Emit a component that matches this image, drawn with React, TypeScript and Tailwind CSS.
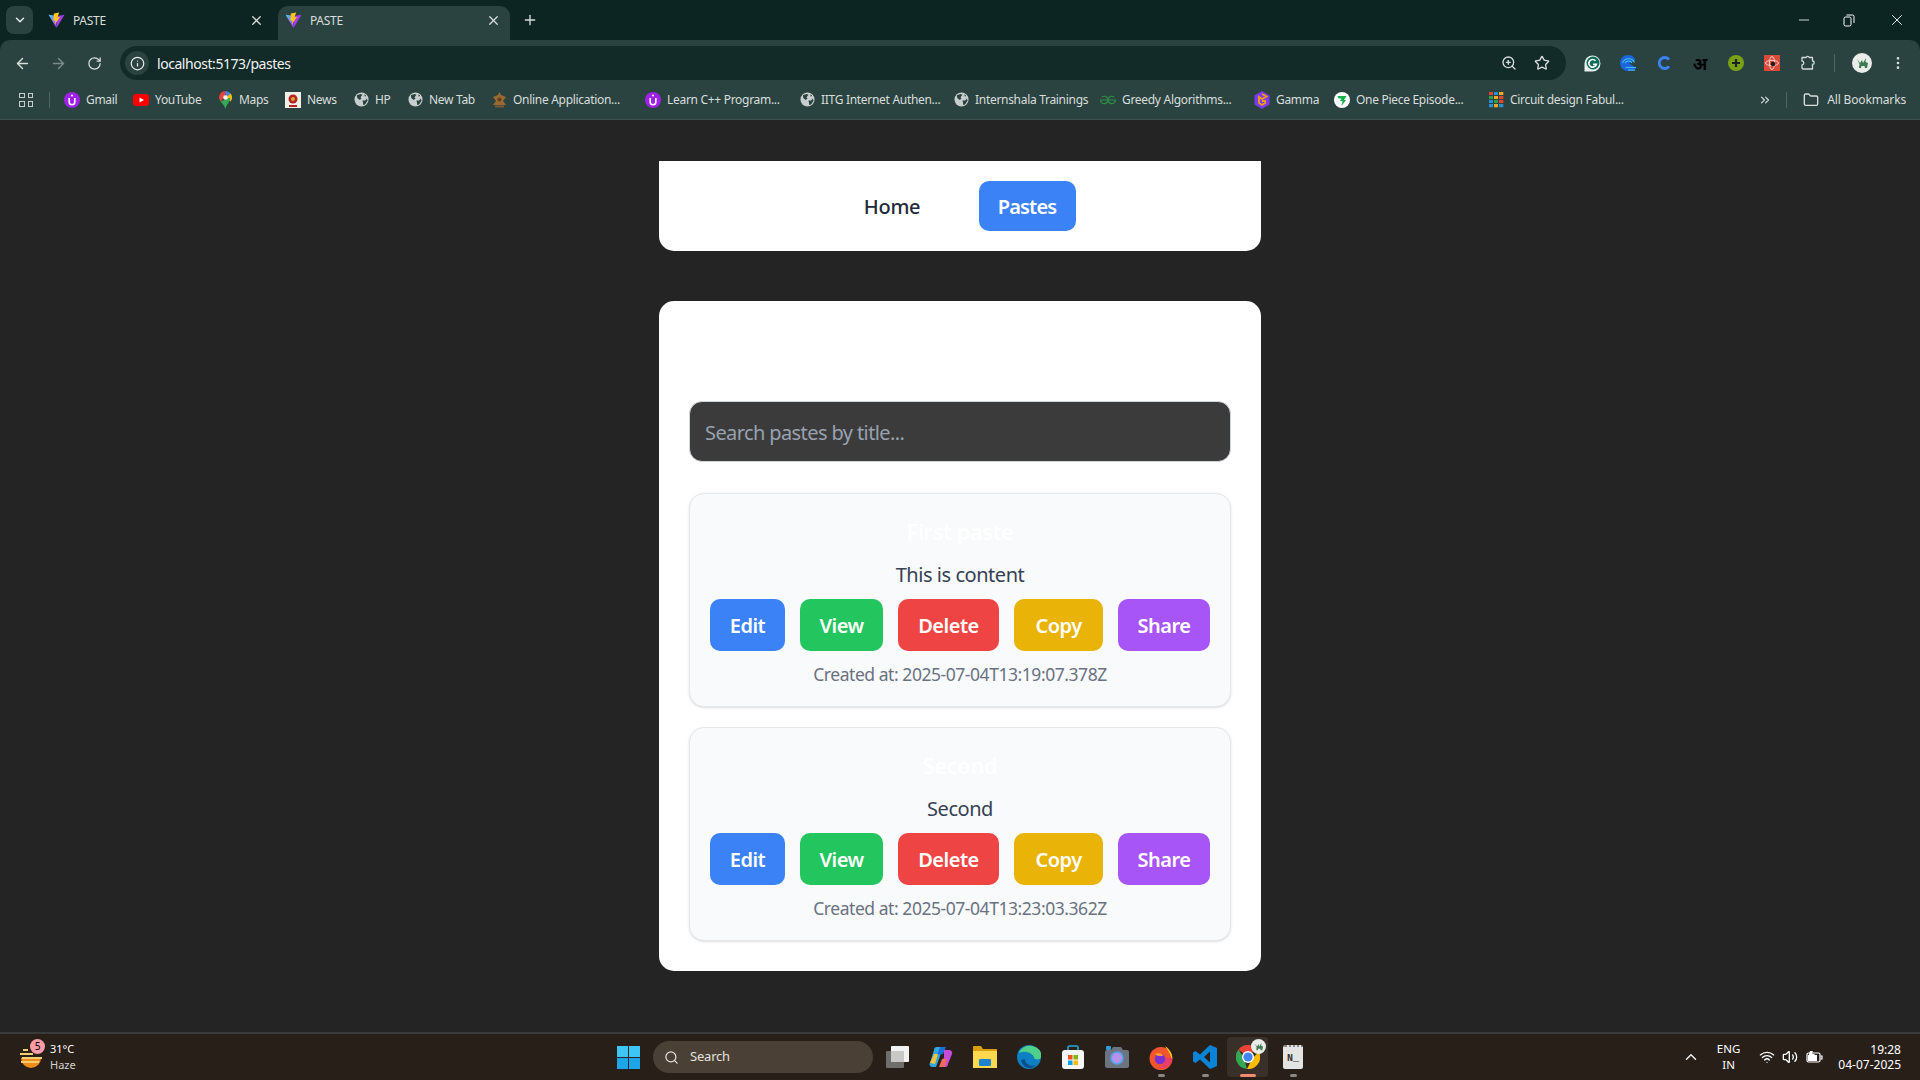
import {
  ArrowLeft,
  ArrowRight,
  ChevronDown,
  ChevronUp,
  ChevronsRight,
  EllipsisVertical,
  Folder,
  Info,
  Minus,
  Plus,
  RotateCw,
  Search,
  Star,
  Volume2,
  Wifi,
  X,
  ZoomIn,
} from 'lucide-react'
import type { ReactNode } from 'react'

function ViteIcon() {
  return (
    <svg width="17" height="17" viewBox="0 0 32 32" className="shrink-0">
      <defs>
        <linearGradient id="viteA" x1="0" y1="0" x2="1" y2="1">
          <stop offset="0" stopColor="#41d1ff" />
          <stop offset="1" stopColor="#bd34fe" />
        </linearGradient>
      </defs>
      <path d="M1 5 L15 7 L16 30 Z" fill="url(#viteA)" />
      <path d="M31 5 L16 8 L16 30 Z" fill="#a43cf0" />
      <path d="M21 1 L11 3 L10 17 L14 16 L13 23 L23 9 L18 10 Z" fill="#ffc517" />
    </svg>
  )
}

function GlobeIcon() {
  return (
    <svg width="15" height="15" viewBox="0 0 16 16" className="shrink-0">
      <circle cx="8" cy="8" r="7.5" fill="#c6cfcd" />
      <path
        d="M3 3.5 L7 2 L9 3 L7 5.5 L8 7 L6 8.5 L3.5 6.5 Z M9 9 L12 9 L13.5 7 L14.5 9 L12 13 L10 14 L9.5 11 Z M11 2.5 L13 4 L11.5 5 Z"
        fill="#2c4340"
      />
    </svg>
  )
}

function PurpleIcon() {
  return (
    <svg width="16" height="16" viewBox="0 0 16 16" className="shrink-0">
      <circle cx="8" cy="8" r="8" fill="#a020e8" />
      <path d="M5.2 6 V10 A2.8 2.8 0 0 0 10.8 10 V6" fill="none" stroke="#fff" strokeWidth="1.6" />
      <circle cx="8" cy="3.6" r="1" fill="#fff" />
    </svg>
  )
}

function YouTubeIcon() {
  return (
    <svg width="16" height="16" viewBox="0 0 16 16" className="shrink-0">
      <rect y="2" width="16" height="12" rx="3" fill="#f00" />
      <path d="M6.5 5.5 L11 8 L6.5 10.5 Z" fill="#fff" />
    </svg>
  )
}

function MapsIcon() {
  return (
    <svg width="13" height="18" viewBox="0 0 13 18" className="shrink-0">
      <path d="M6.5 0 A6.5 6.5 0 0 0 1.5 10.5 L6.5 5 Z" fill="#ea4335" />
      <path d="M6.5 0 A6.5 6.5 0 0 1 11.7 2.6 L6.5 6.5 Z" fill="#4285f4" />
      <path d="M11.7 2.6 A6.5 6.5 0 0 1 11.5 10.5 L6.5 6.5 Z" fill="#fbbc04" />
      <path d="M1.5 10.5 L11.5 6.5 C11 11 8 12 6.5 18 C5.8 15 3.5 13 1.5 10.5 Z" fill="#34a853" />
      <circle cx="6.5" cy="6.5" r="2.3" fill="#f4f4f4" />
    </svg>
  )
}

function NewsIcon() {
  return (
    <svg width="16" height="16" viewBox="0 0 16 16" className="shrink-0">
      <rect width="16" height="16" fill="#f3efe6" />
      <circle cx="8" cy="7" r="4.5" fill="#b3261e" />
      <path d="M4 13 H12 V15 H4 Z" fill="#b3261e" />
      <circle cx="8" cy="7" r="2" fill="#e3a23a" />
    </svg>
  )
}

function EmblemIcon() {
  return (
    <svg width="15" height="16" viewBox="0 0 15 16" className="shrink-0">
      <path d="M7.5 0 L9 3 L14 5 L11 9 L14 13 H1 L4 9 L1 5 L6 3 Z" fill="#9a6b30" />
      <rect x="3" y="13.5" width="9" height="2" fill="#7d5a32" />
      <circle cx="7.5" cy="7.5" r="2" fill="#5e3d22" />
    </svg>
  )
}

function GfgIcon() {
  return (
    <svg width="16" height="16" viewBox="0 0 16 16" className="shrink-0" fill="none" stroke="#2f8d46" strokeWidth="1.2">
      <path d="M8 8 H15.5 A3.7 3.7 0 1 1 14 5" />
      <path d="M8 8 H0.5 A3.7 3.7 0 1 0 2 5" />
    </svg>
  )
}

function GammaIcon() {
  return (
    <svg width="16" height="18" viewBox="0 0 16 18" className="shrink-0">
      <path d="M8 0 L15.5 4.5 V13.5 L8 18 L0.5 13.5 V4.5 Z" fill="#7c3aed" />
      <path d="M8 3 L12.5 5.5 L8 8 L5 6 V12 L8 14 L11 12 V10 L8 10" fill="none" stroke="#f59e0b" strokeWidth="1.8" />
    </svg>
  )
}

function OnePieceIcon() {
  return (
    <svg width="16" height="16" viewBox="0 0 16 16" className="shrink-0">
      <circle cx="8" cy="8" r="8" fill="#fff" />
      <path d="M3.5 4 H12.5 L10 8 H12 L7.5 14 L8.5 9 H6 L7.5 6.5 H4.5 Z" fill="#10b14a" />
    </svg>
  )
}

function TinkercadIcon() {
  const cells = ['#e8442e', '#2b8fd6', '#f5a623', '#2f9e44', '#f5a623', '#e8442e', '#2b8fd6', '#2f9e44', '#e8442e', '#2b8fd6', '#f5a623', '#2b8fd6']
  return (
    <div className="grid h-[16px] w-[15px] shrink-0 grid-cols-3 grid-rows-4 gap-px">
      {cells.map((c, i) => (
        <svg key={i} viewBox="0 0 4 4" preserveAspectRatio="none" className="h-full w-full">
          <rect width="4" height="4" fill={c} />
        </svg>
      ))}
    </div>
  )
}

function Avatar({ size }: { size: number }) {
  return (
    <svg width={size} height={size} viewBox="0 0 20 20">
      <circle cx="10" cy="10" r="10" fill="#e9ece9" />
      <path d="M5 6 L8 10 L10 7 L11 10 L14 5 L13.5 9 L16 10 L15 15 H13 L12.5 13 H9.5 L9 15 H7 L7.5 11 Z" fill="#3c7a55" />
    </svg>
  )
}

const bookmarks: { label: string; icon: ReactNode; w: string }[] = [
  { label: 'Gmail', icon: <PurpleIcon />, w: 'w-[31px]' },
  { label: 'YouTube', icon: <YouTubeIcon />, w: 'w-[46px]' },
  { label: 'Maps', icon: <MapsIcon />, w: 'w-[30px]' },
  { label: 'News', icon: <NewsIcon />, w: 'w-[30px]' },
  { label: 'HP', icon: <GlobeIcon />, w: 'w-[16px]' },
  { label: 'New Tab', icon: <GlobeIcon />, w: 'w-[46px]' },
  { label: 'Online Application...', icon: <EmblemIcon />, w: 'w-[116px]' },
  { label: 'Learn C++ Program...', icon: <PurpleIcon />, w: 'w-[116px]' },
  { label: 'IITG Internet Authen...', icon: <GlobeIcon />, w: 'w-[116px]' },
  { label: 'Internshala Trainings', icon: <GlobeIcon />, w: 'w-[109px]' },
  { label: 'Greedy Algorithms...', icon: <GfgIcon />, w: 'w-[116px]' },
  { label: 'Gamma', icon: <GammaIcon />, w: 'w-[42px]' },
  { label: 'One Piece Episode...', icon: <OnePieceIcon />, w: 'w-[116px]' },
  { label: 'Circuit design Fabul...', icon: <TinkercadIcon />, w: 'w-[114px]' },
]

function Bookmark({ label, icon, w }: { label: string; icon: ReactNode; w: string }) {
  return (
    <div className="flex h-[28px] items-center gap-[6px] px-[8px]">
      <div className="flex w-[16px] justify-center">{icon}</div>
      <span className={`${w} whitespace-nowrap text-[12px] tracking-[-0.3px] text-[#d7dedc]`}>{label}</span>
    </div>
  )
}

function Tab({ active }: { active?: boolean }) {
  return (
    <div
      className={`flex h-[34px] w-[232px] items-center rounded-t-[10px] pb-[6px] pl-[7px] pr-[9px] ${
        active ? 'bg-[#2b4340]' : ''
      }`}
    >
      <ViteIcon />
      <span className="ml-[8px] mt-[2px] text-[12px] tracking-[-0.3px] text-[#d7dedc]">PASTE</span>
      <X size={15} strokeWidth={2} className="ml-auto text-[#d7dedc]" />
    </div>
  )
}

function ExtSlot({ children }: { children: ReactNode }) {
  return <div className="flex h-[34px] w-[36px] items-center justify-center">{children}</div>
}

function BrowserChrome() {
  return (
    <div className="shrink-0 bg-[#0c2523] font-['Noto_Sans',sans-serif]">
      <div className="flex h-[40px] items-end pl-[6px]">
        <div className="mb-[6px] flex h-[28px] w-[27px] items-center justify-center rounded-[8px] bg-[#2b4340]">
          <ChevronDown size={14} strokeWidth={2.5} className="text-[#e5eae9]" />
        </div>
        <div className="ml-[8px]">
          <Tab />
        </div>
        <div className="ml-[5px]">
          <Tab active />
        </div>
        <Plus size={16} strokeWidth={2} className="mb-[12px] ml-[12px] text-[#d7dedc]" />
        <div className="mb-[11px] ml-auto flex items-center">
          <Minus size={16} strokeWidth={1.2} className="mr-[31px] text-white" />
          <svg width="12" height="13" viewBox="0 0 12 13" fill="none" stroke="#fff" strokeWidth="1" className="mr-[33px]">
            <rect x="1" y="3" width="7" height="9" rx="1.5" />
            <path d="M3.5 1 H9.5 A1.5 1.5 0 0 1 11 2.5 V9" />
          </svg>
          <X size={18} strokeWidth={1.2} className="mr-[14px] text-white" />
        </div>
      </div>

      <div className="rounded-t-[10px] bg-[#2b4340]">
        <div className="flex h-[40px] items-end pl-[4px] pr-[4px]">
          <div className="flex h-[34px] w-[116px] items-center text-[#d7dedc]">
            <div className="flex w-[36px] justify-center">
              <ArrowLeft size={17} />
            </div>
            <div className="flex w-[36px] justify-center text-[#7b8d8a]">
              <ArrowRight size={17} />
            </div>
            <div className="flex w-[36px] justify-center">
              <RotateCw size={15} />
            </div>
          </div>
          <div className="flex h-[34px] w-[1446px] items-center rounded-full bg-[#122a28] pl-[5px]">
            <div className="flex h-[24px] w-[24px] items-center justify-center rounded-full bg-[#2b4340]">
              <Info size={15} className="text-[#e5eae9]" />
            </div>
            <span className="ml-[8px] text-[14px] tracking-[-0.45px] text-[#f0f3f2]">localhost:5173/pastes</span>
            <div className="ml-auto flex items-center pr-[16px]">
              <ZoomIn size={16} className="mr-[17px] text-[#d7dedc]" />
              <Star size={16} className="text-[#d7dedc]" />
            </div>
          </div>
          <div className="ml-[8px] flex items-center">
            <ExtSlot>
              <svg width="17" height="17" viewBox="0 0 17 17">
                <path d="M8.5 0.5 A8 8 0 1 1 8.5 16.5 H0.5 V8.5 A8 8 0 0 1 8.5 0.5 Z" fill="#e8f2ef" />
                <circle cx="9" cy="8" r="6.5" fill="#0c6b58" />
                <path d="M11.5 5.8 A3.8 3.8 0 1 0 12.3 9.4 H9" fill="none" stroke="#fff" strokeWidth="1.7" />
              </svg>
            </ExtSlot>
            <ExtSlot>
              <svg width="16" height="16" viewBox="0 0 16 16" fill="none">
                <path d="M8 0 A8 8 0 0 1 15 4 L15 6 L9 8 L16 13 L14 16 H8 A8 8 0 0 1 8 0 Z" fill="#1a66dd" />
                <path d="M14.5 7.5 A6.5 6.5 0 0 0 2.5 8 M12 8 A4 4 0 0 0 5 8 M5.5 12.5 H16 M8 15 H15" stroke="#45c2ee" strokeWidth="1.1" />
              </svg>
            </ExtSlot>
            <ExtSlot>
              <svg width="12" height="14" viewBox="0 0 12 14" fill="none">
                <path d="M11 3.5 A5.5 5.5 0 1 0 11 10.5" stroke="#3b82f6" strokeWidth="2.8" />
              </svg>
            </ExtSlot>
            <ExtSlot>
              <span className="font-['Noto_Sans','DejaVu_Sans',sans-serif] text-[17px] font-bold leading-none text-black">अ</span>
            </ExtSlot>
            <ExtSlot>
              <svg width="16" height="16" viewBox="0 0 16 16">
                <circle cx="8" cy="8" r="8" fill="#7aa116" />
                <path d="M8 4 V12 M4 8 H12" stroke="#16241f" strokeWidth="2.2" />
              </svg>
            </ExtSlot>
            <ExtSlot>
              <svg width="16" height="16" viewBox="0 0 16 16" fill="none">
                <rect width="16" height="16" fill="#d94a38" />
                <ellipse cx="8" cy="8" rx="6.5" ry="2.6" stroke="#f6d8d2" strokeWidth="0.9" />
                <ellipse cx="8" cy="8" rx="2.6" ry="6.5" stroke="#f6d8d2" strokeWidth="0.9" />
                <circle cx="9" cy="9" r="2.2" fill="#1c1c1c" />
              </svg>
            </ExtSlot>
            <ExtSlot>
              <svg width="16" height="16" viewBox="0 0 16 16" fill="none" stroke="#d2dbd9" strokeWidth="1.3" strokeLinejoin="round">
                <path d="M2 2.5 H6 A1.8 1.8 0 0 1 9.4 2.5 H12.5 V6 A1.7 1.7 0 0 1 12.5 9.4 V14 H3 A1 1 0 0 1 2 13 V9.8 A1.8 1.8 0 0 0 2 6.2 Z" />
              </svg>
            </ExtSlot>
            <div className="ml-[8px] mr-[9px] h-[18px] w-px bg-[#4e6461]" />
            <ExtSlot>
              <Avatar size={20} />
            </ExtSlot>
            <ExtSlot>
              <EllipsisVertical size={16} className="text-[#d7dedc]" />
            </ExtSlot>
          </div>
        </div>

        <div className="flex h-[40px] items-center border-b border-[#3d4f4d] pl-[19px] pr-[14px]">
          <div className="mr-[16px] grid h-[14px] w-[14px] shrink-0 grid-cols-2 gap-[3px]">
            <div className="border border-[#c6cfcd]" />
            <div className="border border-[#c6cfcd]" />
            <div className="border border-[#c6cfcd]" />
            <div className="border border-[#c6cfcd]" />
          </div>
          <div className="h-[16px] w-px bg-[#4e6461]" />
          <div className="ml-[6px] flex items-center">
            {bookmarks.map((b) => (
              <Bookmark key={b.label} {...b} />
            ))}
          </div>
          <ChevronsRight size={14} className="ml-auto text-[#d7dedc]" />
          <div className="ml-[14px] h-[16px] w-px bg-[#4e6461]" />
          <Folder size={16} className="ml-[16px] text-[#d7dedc]" />
          <span className="ml-[8px] whitespace-nowrap text-[12px] tracking-[-0.15px] text-[#d7dedc]">All Bookmarks</span>
        </div>
      </div>
    </div>
  )
}

const buttons = [
  { label: 'Edit', cls: 'w-[75px] bg-[#3b82f6]' },
  { label: 'View', cls: 'w-[83px] bg-[#22c55e]' },
  { label: 'Delete', cls: 'w-[101px] bg-[#ef4444]' },
  { label: 'Copy', cls: 'w-[89px] bg-[#eab308]' },
  { label: 'Share', cls: 'w-[92px] bg-[#a855f7]' },
]

function PasteCard({ title, content, created }: { title: string; content: string; created: string }) {
  return (
    <div className="flex h-[214px] flex-col items-center rounded-[15px] border border-[#e5e7eb] bg-[#f9fafb] pt-[18px] shadow-sm">
      <h3 className="text-[22px] font-semibold leading-[38px] tracking-[-0.5px] text-white">{title}</h3>
      <p className="mt-[10px] text-[20px] leading-[30px] tracking-[-0.45px] text-[#364153]">{content}</p>
      <div className="mt-[9px] flex gap-[15px]">
        {buttons.map((b) => (
          <button
            key={b.label}
            className={`${b.cls} h-[52px] rounded-[10px] pt-[2px] text-[20px] font-semibold tracking-[-0.5px] text-white`}
          >
            {b.label}
          </button>
        ))}
      </div>
      <p className="mt-[8px] text-[17.5px] leading-[30px] tracking-[-0.45px] text-[#6a7282]">{created}</p>
    </div>
  )
}

function Taskbar() {
  const slot = 'relative flex h-[40px] w-[44px] items-center justify-center'
  const dot = 'absolute bottom-0 h-[3px] w-[7px] rounded-full bg-[#8a8782]'
  return (
    <div className="flex h-[48px] shrink-0 items-center border-t-2 border-[#3a3a38] bg-[#291f19] font-['Noto_Sans',sans-serif] text-white">
      <div className="flex w-[617px] items-center pl-[19px]">
        <div className="relative h-[24px] w-[24px]">
          <svg width="24" height="24" viewBox="0 0 24 24">
            <path d="M2 13 A10 10 0 0 0 22 13 Z" fill="#f28c18" />
            <path d="M4 4 H9 V6 H4 Z M1 8 H14 V10 H1 Z M3 12 H23 V14 H3 Z M2 16 H20 V18 H2 Z" fill="#f3cd74" />
          </svg>
          <div className="absolute -right-[2px] -top-[6px] flex h-[15px] w-[15px] items-center justify-center rounded-full bg-[#ff9aa8] text-[10px] text-black">
            5
          </div>
        </div>
        <div className="ml-[7px] text-[11px] leading-[16px]">
          <div>31°C</div>
          <div className="text-[#d4d0cd]">Haze</div>
        </div>
      </div>

      <svg width="23" height="23" viewBox="0 0 24 24" className="shrink-0">
        <rect width="11.5" height="11.5" fill="#3cc5f5" />
        <rect x="12.5" width="11.5" height="11.5" fill="#3cc5f5" />
        <rect y="12.5" width="11.5" height="11.5" fill="#1ea4e9" />
        <rect x="12.5" y="12.5" width="11.5" height="11.5" fill="#1ea4e9" />
      </svg>
      <div className="ml-[13px] flex h-[32px] w-[220px] items-center rounded-full bg-[#4a4036] pl-[11px]">
        <Search size={15} className="text-[#e4e1de]" />
        <span className="ml-[11px] text-[13px] tracking-[-0.2px] text-[#e4e1de]">Search</span>
      </div>

      <div className="ml-[2px] flex items-center">
        <div className={slot}>
          <svg width="24" height="24" viewBox="0 0 24 24">
            <rect x="1" y="6" width="18" height="17" rx="1" fill="#6e6e6c" />
            <rect x="6" y="1" width="18" height="16" rx="1" fill="#f2f2f2" />
            <rect x="6" y="6" width="13" height="11" fill="#c8c8c6" />
          </svg>
        </div>
        <div className={slot}>
          <svg width="24" height="24" viewBox="0 0 24 24">
            <path d="M7 2 H14 L10 14 L7 22 H3 A2.5 2.5 0 0 1 1 18 L5 5 A3 3 0 0 1 7 2 Z" fill="#2fa8e0" />
            <path d="M8 10 L11 2 H17 L14 9 Z" fill="#1b6fd8" />
            <path d="M1 18 L5 9 H9 L6 19 Z" fill="#f4c23c" />
            <path d="M15 5 H20 A3 3 0 0 1 23 9 L19 19 A3 3 0 0 1 16 22 H11 L15 12 Z" fill="#c64bd8" />
            <path d="M10 22 L13 14 H18 L16 22 Z" fill="#ef6a5a" />
          </svg>
        </div>
        <div className={slot}>
          <svg width="24" height="22" viewBox="0 0 24 22">
            <path d="M0 1 A1 1 0 0 1 1 0 H8 L10 3 H24 V22 H0 Z" fill="#d99e0b" />
            <rect y="5" width="24" height="17" fill="#ffd84d" />
            <rect x="6" y="13" width="12" height="7" rx="1" fill="#1b83d0" />
          </svg>
        </div>
        <div className={slot}>
          <svg width="24" height="24" viewBox="0 0 24 24">
            <circle cx="12" cy="12" r="12" fill="#0f7fc4" />
            <path d="M2 8 A11 9 0 0 1 24 12 C24 15 18 15 17 13 C17 9 10 6 5 7 Z" fill="#4fd08a" />
            <path d="M8 14 C8 19 13 22 19 20 C15 25 6 24 4 15 Z" fill="#0b4f8a" />
          </svg>
        </div>
        <div className={slot}>
          <svg width="24" height="24" viewBox="0 0 24 24">
            <path d="M7 7 V2.5 A1.5 1.5 0 0 1 8.5 1 H15.5 A1.5 1.5 0 0 1 17 2.5 V7" fill="none" stroke="#27a6d9" strokeWidth="1.6" />
            <rect x="1" y="5" width="22" height="19" rx="3" fill="#f6f6f6" />
            <rect x="7" y="10" width="4.5" height="4.5" fill="#f25022" />
            <rect x="12.5" y="10" width="4.5" height="4.5" fill="#7fba00" />
            <rect x="7" y="15.5" width="4.5" height="4.5" fill="#00a4ef" />
            <rect x="12.5" y="15.5" width="4.5" height="4.5" fill="#ffb900" />
          </svg>
        </div>
        <div className={slot}>
          <svg width="24" height="22" viewBox="0 0 24 22">
            <rect x="1" y="0" width="5" height="4" rx="1" fill="#2f9ed8" />
            <path d="M8 1 H16 L18 4 H22 A2 2 0 0 1 24 6 V20 A2 2 0 0 1 22 22 H2 A2 2 0 0 1 0 20 V6 A2 2 0 0 1 2 4 H6 Z" fill="#6b7480" />
            <circle cx="12" cy="12" r="6.8" fill="#5aa0e8" />
            <circle cx="12" cy="12" r="5" fill="#b792ea" />
          </svg>
        </div>
        <div className={slot}>
          <svg width="24" height="25" viewBox="0 0 24 25">
            <circle cx="12" cy="13.5" r="11.5" fill="#f0552c" />
            <path d="M16 1 C22 5 24 11 23 15 C21 8 19 6 16 1 Z" fill="#ffc128" />
            <path d="M23 13 C23 21 15 25 8 23 C14 22 17 18 16 13 Z" fill="#e83b6e" />
            <circle cx="11" cy="14" r="5.2" fill="#7b2fd6" />
            <path d="M6 9 C9 7 13 8 14 11 L9 11 Z" fill="#ff9a2e" />
          </svg>
          <div className={dot} />
        </div>
        <div className={slot}>
          <svg width="24" height="24" viewBox="0 0 24 24">
            <path d="M17 0 L24 3 V21 L17 24 L7 14.5 L2.5 18 L0 16.5 V7.5 L2.5 6 L7 9.5 Z M17 6.5 L11 12 L17 17.5 Z" fill="#0a84d6" />
          </svg>
          <div className={dot} />
        </div>
        <div className="relative flex h-[40px] w-[41px] items-center justify-center rounded-[4px] bg-[#3a302a]">
          <svg width="24" height="24" viewBox="0 0 24 24">
            <path d="M12 12 L2.5 4.5 A12 12 0 0 1 23 7 H12 Z" fill="#ea4335" />
            <path d="M23 7 A12 12 0 0 1 11 24 L16.5 13 Z" fill="#fbbc04" />
            <path d="M11 24 A12 12 0 0 1 2.5 4.5 L8 13.5 Z" fill="#34a853" />
            <circle cx="12" cy="12" r="6" fill="#fff" />
            <circle cx="12" cy="12" r="4.6" fill="#4285f4" />
          </svg>
          <div className="absolute right-[2px] top-[2px]">
            <Avatar size={15} />
          </div>
          <div className="absolute bottom-0 h-[3px] w-[16px] rounded-full bg-[#f08a70]" />
        </div>
        <div className="relative ml-[3px] flex h-[40px] w-[44px] items-center justify-center">
          <div className="flex h-[24px] w-[20px] items-center justify-center rounded-[2px] border-t-2 border-dotted border-[#8a8a88] bg-[#e4e4e2] font-['Liberation_Mono',monospace] text-[10px] font-bold text-[#333]">
            N_
          </div>
          <div className={dot} />
        </div>
      </div>

      <div className="ml-auto flex items-center pr-[19px]">
        <ChevronUp size={18} className="-ml-[1px] text-[#f0eeec]" />
        <div className="ml-[17px] text-center text-[11.5px] leading-[16px]">
          <div>ENG</div>
          <div>IN</div>
        </div>
        <Wifi size={16} className="ml-[19px]" />
        <Volume2 size={16} className="ml-[7px]" />
        <svg width="17" height="14" viewBox="0 0 17 14" fill="none" stroke="#fff" strokeWidth="1.2" className="ml-[8px]">
          <rect x="1" y="3" width="13" height="9" rx="1.5" />
          <path d="M14.5 6 H16 V9 H14.5" />
          <path d="M4 1 L2.5 6 H6 L5 9 L9 4 H6 L7 1 Z" fill="#fff" stroke="none" />
          <rect x="2" y="5" width="9" height="6" fill="#fff" stroke="none" />
        </svg>
        <div className="ml-[15px] text-right text-[12px] leading-[15px]">
          <div>19:28</div>
          <div>04-07-2025</div>
        </div>
      </div>
    </div>
  )
}

export default function App() {
  return (
    <div className="flex h-screen flex-col overflow-hidden bg-[#242424]">
      <BrowserChrome />
      <main className="flex flex-1 flex-col items-center pt-[41px] font-['Noto_Sans',sans-serif]">
        <nav className="flex h-[90px] w-[602px] items-center justify-center gap-[39px] rounded-b-[15px] bg-white">
          <a className="mt-[2px] w-[95px] text-center text-[20px] font-medium tracking-[-0.3px] text-[#1e2939]">Home</a>
          <a className="flex h-[50px] w-[97px] items-center justify-center rounded-[10px] bg-[#3b82f6] pt-[2px] text-[20px] font-semibold tracking-[-0.8px] text-white">
            Pastes
          </a>
        </nav>

        <section className="mt-[50px] flex w-[602px] flex-col rounded-[15px] bg-white px-[30px] pb-[30px] pt-[100px]">
          <input
            placeholder="Search pastes by title..."
            className="h-[61px] rounded-[13px] border border-[#d1d5dc] bg-[#3b3b3b] px-[15px] pt-[2px] text-[20px] tracking-[-0.6px] outline-none placeholder:text-[#99a1af]"
          />
          <div className="mt-[31px] flex flex-col gap-[20px]">
            <PasteCard title="First paste" content="This is content" created="Created at: 2025-07-04T13:19:07.378Z" />
            <PasteCard title="Second" content="Second" created="Created at: 2025-07-04T13:23:03.362Z" />
          </div>
        </section>
      </main>
      <Taskbar />
    </div>
  )
}
